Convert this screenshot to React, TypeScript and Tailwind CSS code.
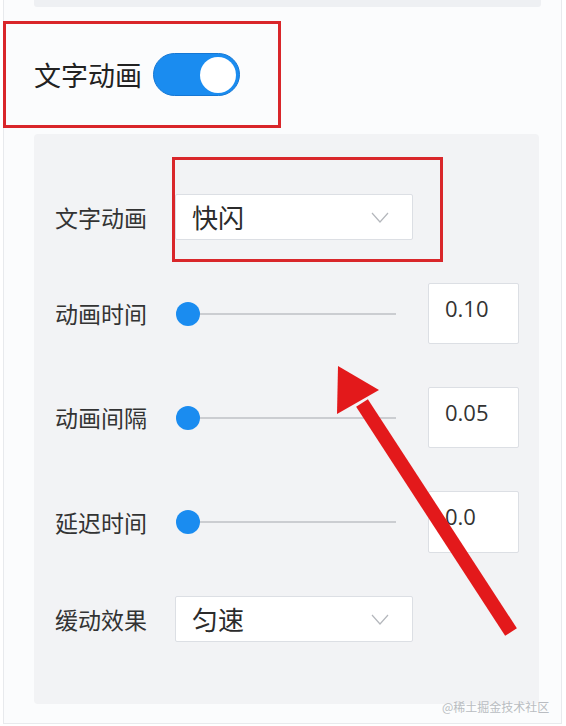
const cjk = { fontFamily: '"Noto Sans CJK SC", "Noto Sans", sans-serif' };
const num = { fontFamily: '"Open Sans", "Noto Sans", sans-serif' };

const Chevron = () => (
	<svg width="18" height="11" viewBox="0 0 18 11" fill="none">
		<polyline points="1,1 9,10 17,1" stroke="#b4b7bc" strokeWidth="1.2" />
	</svg>
);

const Select = ({ value }: { value: string }) => (
	<div className="w-[238px] h-[46px] bg-white border border-[#dcdfe4] rounded-[2px] flex items-center justify-between pl-[16px] pr-[23px]">
		<span className="text-[26px] text-[#2b2b2b] leading-none" style={cjk}>
			{value}
		</span>
		<Chevron />
	</div>
);

const SliderRow = ({ label, value, h }: { label: string; value: string; h: string }) => (
	<div className={`flex items-center mt-[43px] ${h}`}>
		<span className="w-[121px] text-[23px] text-[#333] leading-none" style={cjk}>
			{label}
		</span>
		<div className="relative w-[220px] h-[24px] flex items-center">
			<div className="absolute left-[12px] right-0 h-[2px] bg-[#cbcdd1]" />
			<div className="relative w-[24px] h-[24px] rounded-full bg-[#1a8cf0]" />
		</div>
		<div className="ml-[32px] w-[91px] h-full bg-white border border-[#dcdfe4] rounded-[2px] pl-[16px] pt-[9px]">
			<span className="text-[22px] text-[#333] leading-[30px]" style={num}>
				{value}
			</span>
		</div>
	</div>
);

export default function App() {
	return (
		<div className="relative w-[566px] h-[726px] bg-white overflow-hidden">
			<div className="ml-[3px] mr-[4px] h-[724px] border-l border-r border-b border-[#e8eaed] bg-[#fbfcfd]">
				{/* 위 패널 끝자락 */}
				<div className="ml-[30px] mr-[20px] h-[7px] bg-[#eef0f3] rounded-b-[3px]" />

				{/* 문자 애니메이션 스위치 */}
				<div className="ml-[-1px] mt-[14px] w-[278px] h-[107px] border-[3px] border-[#d9262a] flex items-center pl-[28px] gap-[11px]">
					<span className="text-[27px] text-[#222] leading-none" style={cjk}>
						文字动画
					</span>
					<div className="w-[87px] h-[43px] rounded-full bg-[#1a8cf0] border border-[#1577d4] flex items-center justify-end pr-[3px]">
						<div className="w-[36px] h-[36px] rounded-full bg-white" />
					</div>
				</div>

				<div className="ml-[30px] mt-[6px] w-[505px] h-[570px] bg-[#f2f3f5] rounded-[4px] pl-[21px] pt-[60px]">
					<div className="flex items-center h-[46px]">
						<span className="w-[120px] text-[23px] text-[#333] leading-none" style={cjk}>
							文字动画
						</span>
						<div className="relative">
							<Select value="快闪" />
							<div className="absolute -left-[3px] -right-[30px] -top-[37px] -bottom-[22px] border-[3px] border-[#d9262a]" />
						</div>
					</div>

					<SliderRow label="动画时间" value="0.10" h="h-[61px]" />
					<SliderRow label="动画间隔" value="0.05" h="h-[61px]" />
					<SliderRow label="延迟时间" value="0.0" h="h-[62px]" />

					<div className="flex items-center h-[46px] mt-[43px]">
						<span className="w-[120px] text-[23px] text-[#333] leading-none" style={cjk}>
							缓动效果
						</span>
						<Select value="匀速" />
					</div>
				</div>
			</div>

			{/* 빨간 화살표 */}
			<svg className="absolute left-0 top-0 pointer-events-none" width="566" height="726">
				<line x1="511" y1="632" x2="362" y2="403" stroke="#e3191b" strokeWidth="14" />
				<polygon points="338,366 379,390 337,414" fill="#e3191b" />
			</svg>

			<span className="absolute left-[442px] top-[698px] text-[12px] text-[#b9bcc1]" style={cjk}>
				@稀土掘金技术社区
			</span>
		</div>
	);
}
